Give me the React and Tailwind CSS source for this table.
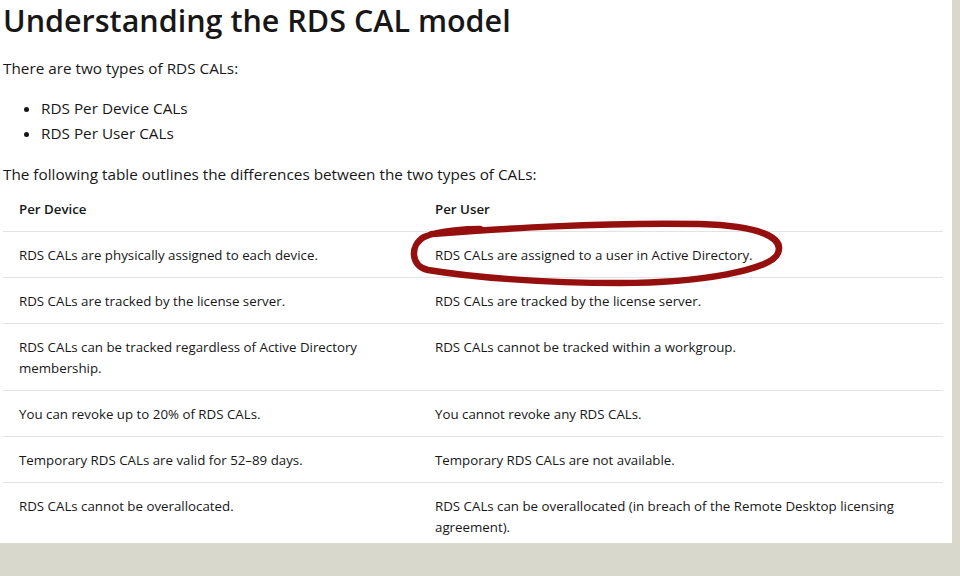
const ROWS = [
  ['RDS CALs are physically assigned to each device.', 'RDS CALs are assigned to a user in Active Directory.'],
  ['RDS CALs are tracked by the license server.', 'RDS CALs are tracked by the license server.'],
  ['RDS CALs can be tracked regardless of Active Directory membership.', 'RDS CALs cannot be tracked within a workgroup.'],
  ['You can revoke up to 20% of RDS CALs.', 'You cannot revoke any RDS CALs.'],
  ['Temporary RDS CALs are valid for 52–89 days.', 'Temporary RDS CALs are not available.'],
  ['RDS CALs cannot be overallocated.', 'RDS CALs can be overallocated (in breach of the Remote Desktop licensing agreement).'],
]

export default function App() {
  return (
    <div className="min-h-screen bg-[#d8d8cc]" style={{ fontFamily: '"Open Sans", "Noto Sans", sans-serif' }}>
      <div className="relative w-[952px] h-[543px] overflow-hidden bg-white pl-[3px] text-[#171717]">
        <h1 className="text-[30.5px] font-semibold leading-[40px]">Understanding the RDS CAL model</h1>
        <p className="mt-[16px] text-[15.3px] leading-[24px]">There are two types of RDS CALs:</p>
        <ul className="mt-[16px] list-disc pl-[38px] text-[15.3px] leading-[25px]">
          <li>RDS Per Device CALs</li>
          <li>RDS Per User CALs</li>
        </ul>
        <p className="mt-[16px] text-[15.3px] leading-[24px]">The following table outlines the differences between the two types of CALs:</p>
        <table className="mt-[2px] w-[940px] table-fixed border-collapse text-[13.3px] leading-[21px]">
          <thead>
            <tr className="border-b border-[#e3e3e3]">
              <th className="w-[416px] px-[16px] py-[11px] text-left font-semibold">Per Device</th>
              <th className="px-[16px] py-[11px] text-left font-semibold">Per User</th>
            </tr>
          </thead>
          <tbody>
            {ROWS.map((r, i) => (
              <tr key={i} className="border-b border-[#e3e3e3] align-top">
                <td className="px-[16px] pt-[13px] pb-[11px]">{r[0]}</td>
                <td className="px-[16px] pt-[13px] pb-[11px]">{r[1]}</td>
              </tr>
            ))}
          </tbody>
        </table>
        <svg className="absolute left-0 top-0 pointer-events-none" width="952" height="543">
          <path
            d="M 432 234 C 500 229, 600 222, 700 224 C 762 226, 784 238, 778 253 C 772 270, 700 283, 620 283 C 540 283, 470 277, 428 270 C 410 266, 410 245, 424 237 C 440 230, 470 229, 480 229"
            fill="none" stroke="#960f0f" strokeWidth="6.5" strokeLinecap="round" />
        </svg>
      </div>
    </div>
  )
}
